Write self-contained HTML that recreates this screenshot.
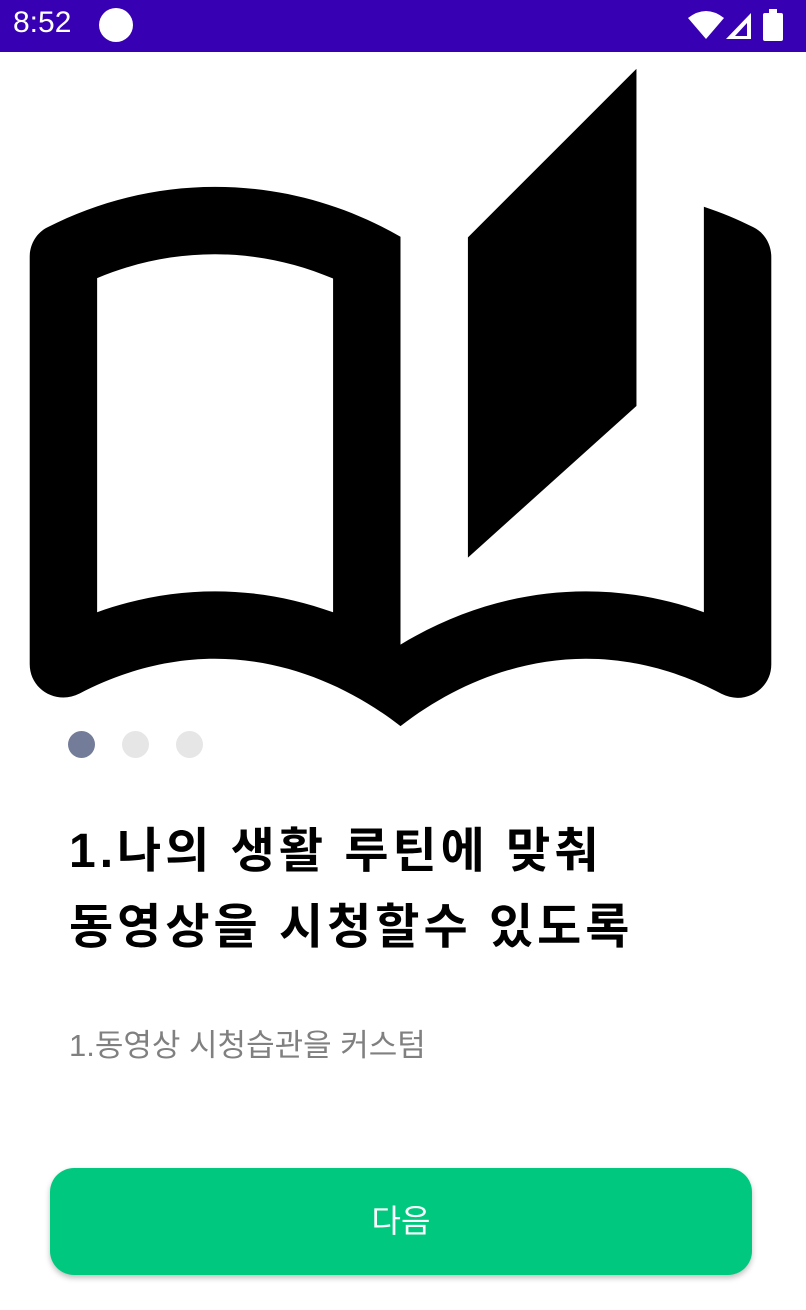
<!DOCTYPE html>
<html><head><meta charset="utf-8"><style>
body{margin:0;width:806px;height:1310px;background:#fff;position:relative;overflow:hidden;font-family:"Liberation Sans","Noto Sans CJK KR",sans-serif}
.sb{position:absolute;left:0;top:0;width:806px;height:52px;background:#3700B3;color:#fff}
.dot{position:absolute;top:731px;width:27px;height:27px;border-radius:50%;background:#e6e6e6}
h1{position:absolute;left:69px;top:814px;margin:0;font-size:48px;line-height:76px;font-weight:bold;color:#000;letter-spacing:4px;white-space:nowrap}
.sub{position:absolute;left:69px;top:1020px;font-size:31px;color:#808080;white-space:nowrap}
.btn{position:absolute;left:50px;top:1168px;width:702px;height:107px;border-radius:24px;background:#00C97F;color:#fff;font-size:32px;text-align:center;line-height:107px;box-shadow:0 3px 6px rgba(0,0,0,.25)}
</style></head><body>
<div class="sb">
<div style="position:absolute;left:13px;top:6px;font-size:30px">8:52</div>
<div style="position:absolute;left:99px;top:8px;width:34px;height:34px;border-radius:50%;background:#fff"></div>
<svg style="position:absolute;left:686px;top:8px" width="110" height="34" viewBox="0 0 110 34">
<path d="M2 10 Q20 -4 38 10 L20 31Z" fill="#fff"/>
<path d="M40 31 L65 5 L65 31Z" fill="#fff"/><path d="M49 28 L61 15 L61 28Z" fill="#3700B3"/>
<rect x="77" y="5" width="20" height="28" rx="2" fill="#fff"/><rect x="83" y="1" width="8" height="5" fill="#fff"/>
</svg>
</div>
<svg style="position:absolute;left:-3.7px;top:52px" width="809" height="809" viewBox="0 0 24 24"><path fill="#000" d="M22.47 5.2c-.47-.24-.96-.44-1.47-.61v12.03c-1.14-.41-2.31-.62-3.5-.62-1.9 0-3.78.54-5.5 1.580V5.48C10.38 4.55 8.51 4 6.5 4c-1.79 0-3.48.44-4.97 1.2-.33.16-.53.51-.53.88v12.08c0 .58.47.99 1 .99.16 0 .32-.04.48-.12C3.690 18.4 5.05 18 6.5 18c2.07 0 3.98.82 5.5 2 1.52-1.180 3.43-2 5.5-2 1.45 0 2.81.4 4.02 1.04.16.08.32.12.48.12.52 0 1-.41 1-.99V6.08c0-.37-.2-.72-.53-.88zM10 16.62C8.86 16.21 7.69 16 6.5 16c-1.19 0-2.360.21-3.5.62V6.71C4.11 6.24 5.28 6 6.5 6c1.2 0 2.39.25 3.5.72v9.9zM19 .5l-5 5V15l5-4.5V.5z"/></svg>
<div class="dot" style="left:68px;background:#737d99"></div>
<div class="dot" style="left:122px"></div>
<div class="dot" style="left:176px"></div>
<h1>1.나의 생활 루틴에 맞춰<br>동영상을 시청할수 있도록</h1>
<div class="sub">1.동영상 시청습관을 커스텀</div>
<div class="btn">다음</div>
</body></html>
